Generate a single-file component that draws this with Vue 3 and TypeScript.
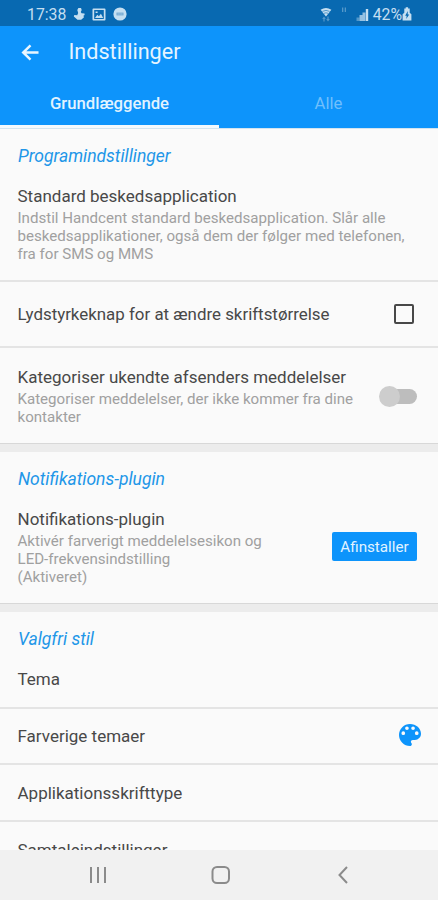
<script setup lang="ts">
import { ref } from 'vue'

const tabs = ['Grundlæggende', 'Alle']
const activeTab = ref(0)
const volumeKey = ref(false)
const categorise = ref(false)
</script>

<template>
  <div class="screen">
    <header class="status">
      <div class="status-left">
        <span class="clock">17:38</span>
        <svg class="ico-hand" viewBox="0 0 12 14"><path d="M5.4 1h2.600l.7 2-.9 2 .8 1.200 2.900.3.100 1.500-1.200.8.6 1.500-2.800 2.500H4.500L.8 9.600 1.300 8l2.900.2L5.200 6 4.300 3z" /></svg>
        <svg class="ico-picture" viewBox="0 0 14 13"><path fill-rule="evenodd" d="M1.4.5h11.2q.9 0 .9.9v10.2q0 .9-.9.9H1.4q-.9 0-.9-.9V1.4Q.5.5 1.4.5zM2.2 2v9h9.6V2zM3 10l2.3-3.2 1.6 1.5 2-2.6L11.2 10zM3.6 3.5h2v1.6h-2z" /></svg>
        <svg class="ico-bubble" viewBox="0 0 14 14"><circle cx="7" cy="7" r="6.6" /><path class="bubble-mark" d="M3.500 5.600h7v2.800h-7z" /><path d="M4.6 6.500h1v1h-1zM6.500 6.500h1v1h-1zM8.400 6.500h1v1h-1z" /></svg>
      </div>
      <div class="status-right">
        <svg class="ico-wifi" viewBox="0 0 12 15"><path d="M.6 2.8Q6-1 11.4 2.8L6 9.4z" /><path class="wave" d="M2.4 4.4q3.6-2 7.2 0M4 6.3q2-1 4 0" /><path class="dim" d="M4 9.5 2.2 12h1.2v2.5h1.2V12h1.2zM8 14.5 6.2 12h1.2V9.5h1.2V12h1.2z" /></svg>
        <svg class="ico-volte" viewBox="0 0 6 6"><path d="M1 .5h1.3v4.5H1zM3.7.5H5v4.5H3.700z" /></svg>
        <svg class="ico-signal" viewBox="0 0 13 13"><path class="dim" d="M.5 9.500H3.500V13H.500z" /><path class="soft" d="M3.500 7H6.500V13H3.500zM6.500 4.500H9.500V13H6.500z" /><path d="M9.800 1h2.400V13H9.800z" /></svg>
        <span class="percent">42%</span>
        <svg class="ico-battery" viewBox="0 0 10 14"><path d="M2.300 1.500h1.400V.3h2.400v1.200h1.600v4.200l1.700 1.500V13.500H.6V7.200l1.700-1.500z" /><path class="cut" d="M5.800 4 3.200 8.800h1.500L4.200 12l3-4.400H5.700z" /></svg>
      </div>
    </header>

    <div class="appbar">
      <svg class="back" viewBox="0 0 20 18"><path d="M10 1.500 2.300 9 10 16.500M2.500 9H18.500" /></svg>
      <h1>Indstillinger</h1>
    </div>
    <nav class="tabs">
      <button
        v-for="(tab, i) in tabs"
        :key="tab"
        class="tab"
        :class="{ active: i === activeTab }"
        @click="activeTab = i"
      >{{ tab }}</button>
    </nav>

    <main class="content">
      <section class="group">
        <h2>Programindstillinger</h2>
        <div class="item intro">
          <p class="title">Standard beskedsapplication</p>
          <p class="desc">Indstil Handcent standard beskedsapplication. Slår alle<br />beskedsapplikationer, også dem der følger med telefonen,<br />fra for SMS og MMS</p>
        </div>
        <div class="item check-row" @click="volumeKey = !volumeKey">
          <p class="title volume-title">Lydstyrkeknap for at ændre skriftstørrelse</p>
          <span class="checkbox" :class="{ checked: volumeKey }"></span>
        </div>
        <div class="item switch-row" @click="categorise = !categorise">
          <div>
            <p class="title">Kategoriser ukendte afsenders meddelelser</p>
            <p class="desc">Kategoriser meddelelser, der ikke kommer fra dine<br />kontakter</p>
          </div>
          <span class="switch" :class="{ on: categorise }"><i></i></span>
        </div>
      </section>

      <section class="group">
        <h2>Notifikations-plugin</h2>
        <div class="item plugin">
          <div>
            <p class="title">Notifikations-plugin</p>
            <p class="desc">Aktivér farverigt meddelelsesikon og<br />LED-frekvensindstilling<br />(Aktiveret)</p>
          </div>
          <button class="uninstall">Afinstaller</button>
        </div>
      </section>

      <section class="group">
        <h2>Valgfri stil</h2>
        <div class="item theme"><p class="title">Tema</p></div>
        <div class="item row colour-row">
          <p class="title">Farverige temaer</p>
          <svg class="palette" viewBox="3 3 18 18"><path d="M12 3a9 9 0 0 0 0 18c.83 0 1.500-.67 1.500-1.500 0-.39-.15-.74-.39-1.010-.23-.26-.38-.61-.38-.99 0-.83.67-1.500 1.500-1.500H16c2.760 0 5-2.240 5-5 0-4.420-4.030-8-9-8zm-5.500 9a1.500 1.500 0 1 1 0-3 1.500 1.500 0 0 1 0 3zm3-4a1.500 1.500 0 1 1 0-3 1.500 1.500 0 0 1 0 3zm5 0a1.500 1.500 0 1 1 0-3 1.500 1.500 0 0 1 0 3zm3 4a1.500 1.500 0 1 1 0-3 1.500 1.500 0 0 1 0 3z" /></svg>
        </div>
        <div class="item row"><p class="title">Applikationsskrifttype</p></div>
        <div class="item row"><p class="title">Samtaleindstillinger</p></div>
      </section>
    </main>

    <footer class="navbar">
      <svg viewBox="0 0 20 20"><path d="M3 2v16M10 2v16M17 2v16" /></svg>
      <svg viewBox="0 0 20 20"><rect x="1.500" y="2" width="16.500" height="16" rx="4.500" /></svg>
      <svg viewBox="0 0 20 20"><path d="M14 2 6.500 10l7.500 8" /></svg>
    </footer>
  </div>
</template>

<style>
body {
  margin: 0;
  background: #fafafa;
}
</style>

<style scoped>
.screen {
  width: 438px;
  height: 900px;
  display: flex;
  flex-direction: column;
  overflow: hidden;
  background: #fafafa;
  font-family: Roboto, sans-serif;
  color: #484848;
}
p, h1, h2 { margin: 0; font-weight: 400; }
button { font-family: inherit; border: 0; padding: 0; }
svg { flex: none; }

.status {
  flex: none;
  height: 26px;
  display: flex;
  justify-content: space-between;
  align-items: center;
  padding: 2px 26px 0 27px;
  box-sizing: border-box;
  background: #0869b1;
  color: #c5dff1;
  font-size: 15.800px;
}
.status svg { fill: #c5dff1; }
.status svg .cut { fill: #0869b1; }
.status svg .bubble-mark { fill: #6fa6d0; }
.status .dim { opacity: .4; }
.status .soft { opacity: .75; }
.status-left, .status-right { display: flex; align-items: center; }
.ico-hand { width: 12px; height: 14px; margin-left: 7px; }
.ico-picture { width: 14px; height: 13px; margin-left: 7px; }
.ico-bubble { width: 14px; height: 14px; margin-left: 7px; }
.ico-wifi { width: 12px; height: 15px; }
.status svg .wave { fill: none; stroke: #0869b1; stroke-width: .6; }
.ico-volte { width: 6px; height: 6px; margin: -8px 9px 0; opacity: .4; }
.ico-signal { width: 13px; height: 13px; margin-right: 4px; }
.ico-battery { width: 10px; height: 14px; }

.appbar {
  flex: none;
  height: 52px;
  display: flex;
  align-items: center;
  gap: 28.500px;
  padding-left: 21px;
  background: #0d94fb;
}
.back { width: 19px; height: 17px; }
.back path { fill: none; stroke: #e9f6ff; stroke-width: 2.600; }
h1 { font-size: 21.600px; line-height: 24px; color: #e5f4ff; }

.tabs {
  flex: none;
  height: 51px;
  display: grid;
  grid-template-columns: 1fr 1fr;
  background: #0d94fb;
  border-bottom: 1px solid #d3e4f0;
  box-sizing: border-box;
}
.tab {
  background: transparent;
  color: #70bffc;
  font-size: 16.700px;
  padding-top: 4px;
  border-bottom: 3px solid transparent;
}
.tab.active { color: #e2f3ff; border-bottom-color: #f3f9fd; font-weight: 500; }

.content { flex: 1; min-height: 0; overflow: hidden; }
h2 {
  font-size: 17.500px;
  line-height: 20px;
  font-style: italic;
  color: #2196e8;
  padding: 17px 17px 0 18px;
}
.item {
  box-sizing: border-box;
  padding: 0 21px 0 17.500px;
  border-bottom: 2px solid #e4e4e4;
}
.group { border-bottom: 8px solid #ececec; }
.group .item:last-child { border-bottom: 1px solid #d8d8d8; }
.title { font-size: 17px; line-height: 20px; white-space: nowrap; }
.volume-title { font-size: 16.900px; }
.desc { font-size: 15.100px; line-height: 18px; color: #a0a0a0; white-space: nowrap; margin-top: 3px; }
.intro { height: 116px; padding-top: 20px; }
.check-row { height: 66px; display: flex; justify-content: space-between; align-items: center; padding-right: 24px; }
.checkbox { width: 20px; height: 20px; box-sizing: border-box; border: 2px solid #484848; border-radius: 2px; }
.checkbox.checked { background: #0d94fb; }
.switch-row { height: 96px; padding-top: 1px; display: flex; justify-content: space-between; align-items: center; }
.switch { position: relative; width: 34px; height: 15px; border-radius: 8px; background: #bdbdbd; }
.switch i { position: absolute; left: -4px; top: -3px; width: 21px; height: 21px; border-radius: 50%; background: #cdcdcd; }
.switch.on i { left: 17px; background: #0d94fb; }
.plugin { height: 115px; padding-top: 20px; display: flex; justify-content: space-between; align-items: flex-start; }
.uninstall {
  width: 85px;
  height: 29px;
  margin-top: 23px;
  border-radius: 2px;
  background: #0d94fb;
  color: #e2f3ff;
  font-size: 15.200px;
}
.theme { height: 60px; padding-top: 20px; }
.row { height: 57px; display: flex; align-items: center; justify-content: space-between; padding-right: 17px; }
.colour-row { height: 56px; }
.palette { width: 22px; height: 22px; margin-top: -2px; fill: #0d94fb; }

.navbar {
  flex: none;
  height: 50px;
  background: #f1f1f1;
  display: flex;
  justify-content: space-between;
  align-items: center;
  padding: 0 85px 0 88px;
}
.navbar svg { width: 20px; height: 20px; fill: none; stroke: #8b8b8b; stroke-width: 2; }
</style>
